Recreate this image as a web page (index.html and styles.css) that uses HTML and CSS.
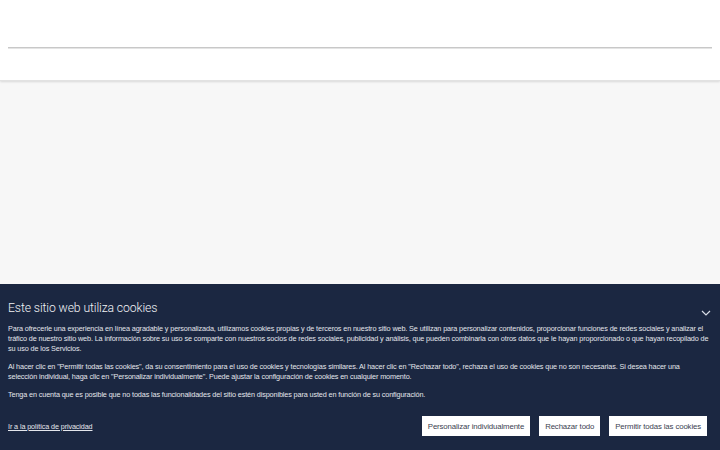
FILE: index.html
```html
<!DOCTYPE html>
<html lang="es">
<head>
<meta charset="utf-8">
<link rel="stylesheet" href="styles.css">
</head>
<body>
<header class="header">
  <div class="header-top"></div>
  <div class="header-line"></div>
</header>
<main class="main"></main>
<section class="cookie">
  <div class="cookie-head">
    <h2 class="cookie-title">Este sitio web utiliza cookies</h2>
    <svg class="chev" width="10" height="6" viewBox="0 0 10 6"><path d="M1 1 L5 5 L9 1" fill="none" stroke="#d8dce6" stroke-width="1.2"/></svg>
  </div>
  <p class="cookie-text">Para ofrecerle una experiencia en línea agradable y personalizada, utilizamos cookies propias y de terceros en nuestro sitio web. Se utilizan para personalizar contenidos, proporcionar funciones de redes sociales y analizar el tráfico de nuestro sitio web. La información sobre su uso se comparte con nuestros socios de redes sociales, publicidad y análisis, que pueden combinarla con otros datos que le hayan proporcionado o que hayan recopilado de su uso de los Servicios.</p>
  <p class="cookie-text">Al hacer clic en "Permitir todas las cookies", da su consentimiento para el uso de cookies y tecnologías similares. Al hacer clic en "Rechazar todo", rechaza el uso de cookies que no son necesarias. Si desea hacer una selección individual, haga clic en "Personalizar individualmente". Puede ajustar la configuración de cookies en cualquier momento.</p>
  <p class="cookie-text">Tenga en cuenta que es posible que no todas las funcionalidades del sitio estén disponibles para usted en función de su configuración.</p>
  <div class="cookie-foot">
    <a class="policy" href="#">Ir a la política de privacidad</a>
    <div class="btns">
      <button class="btn">Personalizar individualmente</button>
      <button class="btn">Rechazar todo</button>
      <button class="btn">Permitir todas las cookies</button>
    </div>
  </div>
</section>
</body>
</html>
```
FILE: styles.css
```css
html, body { margin: 0; padding: 0; }
body {
  width: 720px; height: 450px; overflow: hidden;
  font-family: "Liberation Sans", Arial, sans-serif;
  background: #f7f7f7;
  display: flex; flex-direction: column;
}
.header {
  height: 81px; background: #fff;
  box-shadow: 0 1px 2px rgba(0,0,0,0.12);
  border-bottom: 1px solid #e2e2e2;
  box-sizing: border-box;
  padding: 0 8px;
  position: relative; z-index: 1;
}
.header-top { height: 47px; }
.header-line { height: 1px; background: #c8c8c8; box-shadow: 0 1px 0 #e4e4e4; }
.main { height: 203px; background: #f7f7f7; }
.cookie {
  flex: 1;
  background: #1b2741;
  color: #e6e8ee;
  padding: 16px 13px 0 8px;
}
.cookie-head { display: flex; justify-content: space-between; align-items: flex-end; margin-bottom: 8px; }
.cookie-title { margin: 0; font-family: Roboto, "Liberation Sans", sans-serif; font-weight: 300; font-size: 12.2px; letter-spacing: -0.1px; line-height: 16px; color: #f2f3f6; }
.chev { margin-bottom: 0; margin-right: -4px; }
.cookie-text { margin: 0 -3px 8px 0; font-size: 7.25px; line-height: 10px; letter-spacing: -0.12px; color: #e4e6ec; }
.cookie-foot { display: flex; justify-content: space-between; align-items: center; margin-top: 16px; }
.policy { color: #e4e6ec; font-size: 7.2px; letter-spacing: -0.1px; text-decoration: underline; }
.btns { display: flex; gap: 9px; }
.btn {
  height: 20px; padding: 0 6px; border: none; background: #fff;
  font-family: "Liberation Sans", Arial, sans-serif; font-size: 7.8px; letter-spacing: -0.12px; color: #3a4150;
}
```
